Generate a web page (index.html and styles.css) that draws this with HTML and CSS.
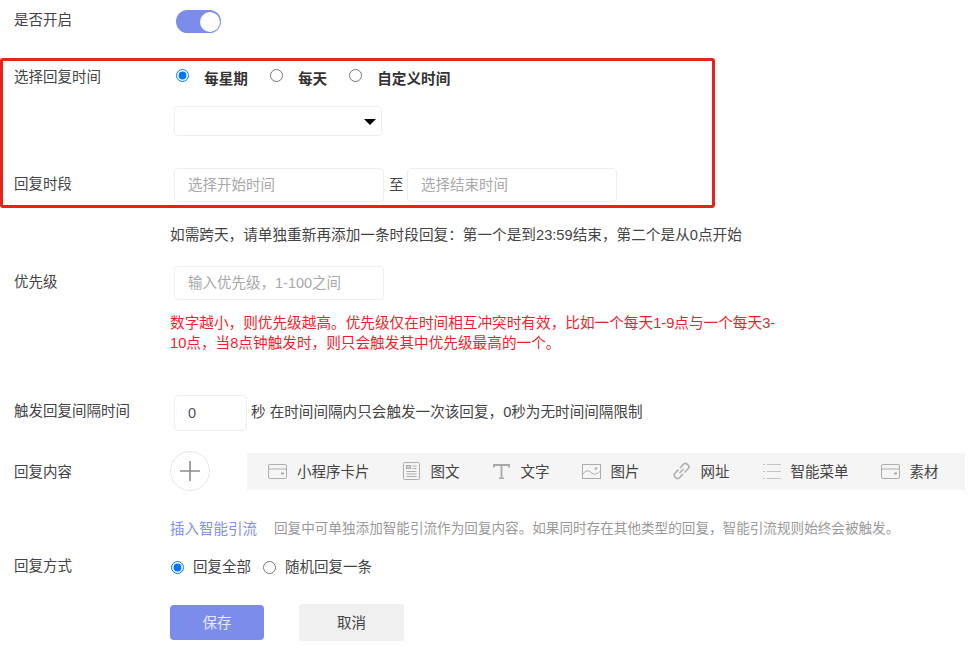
FILE: index.html
```html
<!DOCTYPE html>
<html lang="zh-CN">
<head>
<meta charset="utf-8">
<title>回复设置</title>
<link rel="stylesheet" href="styles.css">
</head>
<body>
<form class="form">
  <div class="row row-switch">
    <span class="label">是否开启</span>
    <div class="field-inset"><span class="switch"><span class="knob"></span></span></div>
  </div>

  <section class="highlight">
    <div class="row row-radio">
      <span class="label label-box">选择回复时间</span>
      <div class="week-radios">
        <label class="week-radio"><input type="radio" name="cycle" checked><b>每星期</b></label>
        <label class="week-radio"><input type="radio" name="cycle"><b>每天</b></label>
        <label class="week-radio"><input type="radio" name="cycle"><b>自定义时间</b></label>
      </div>
    </div>
    <div class="row row-select">
      <span class="label label-box"></span>
      <div class="select"><span class="caret"></span></div>
    </div>
    <div class="row row-time">
      <span class="label label-box label-up-small">回复时段</span>
      <input class="input input-wide" placeholder="选择开始时间">
      <span class="to">至</span>
      <input class="input input-wide" placeholder="选择结束时间">
    </div>
  </section>

  <p class="hint">如需跨天，请单独重新再添加一条时段回复：第一个是到23:59结束，第二个是从0点开始</p>

  <div class="row row-priority">
    <span class="label label-up-small">优先级</span>
    <div class="field-inset"><input class="input input-wide" placeholder="输入优先级，1-100之间"></div>
  </div>
  <p class="warn">数字越小，则优先级越高。优先级仅在时间相互冲突时有效，比如一个每天1-9点与一个每天3-<br>10点，当8点钟触发时，则只会触发其中优先级最高的一个。</p>

  <div class="row row-interval">
    <span class="label label-up">触发回复间隔时间</span>
    <div class="field-inset interval">
      <input class="input input-num" value="0">
      <span class="unit">秒 在时间间隔内只会触发一次该回复，0秒为无时间间隔限制</span>
    </div>
  </div>

  <div class="row row-content">
    <span class="label label-down">回复内容</span>
    <span class="plus">
      <svg width="20" height="20" viewBox="0 0 20 20"><path d="M10 0v20M0 10h20" stroke="#8c8c8c" stroke-width="1.6" fill="none"/></svg>
    </span>
    <div class="toolbar">
      <span class="tool">
        <svg width="19" height="15" viewBox="0 0 19 15" fill="none" stroke="#adadad"><rect x=".5" y=".5" width="18" height="14" rx="1.500"/><path d="M1 5h17"/><path d="M13 9.500h3" stroke-width="2"/></svg>
        <span class="tool-text">小程序卡片</span>
      </span>
      <span class="tool">
        <svg width="19" height="18" viewBox="0 0 19 18" fill="none" stroke="#adadad"><rect x="1.500" y=".5" width="16" height="17" rx="1"/><rect x="4.500" y="3.500" width="4" height="3" fill="#ccc"/><path d="M10.500 4h4M10.500 6.500h4M4.500 9.500h10M4.500 12h10M4.500 14.500h10"/></svg>
        <span class="tool-text">图文</span>
      </span>
      <span class="tool">
        <svg width="19" height="15" viewBox="0 0 19 15" fill="none" stroke="#a8a8a8" stroke-width="1.800"><path d="M2 3.500V1h15v2.500M9.500 1v14M7 14.500h5"/></svg>
        <span class="tool-text">文字</span>
      </span>
      <span class="tool">
        <svg width="19" height="15" viewBox="0 0 19 15" fill="none" stroke="#adadad"><rect x=".5" y=".5" width="18" height="14"/><path d="M1 10c3-4 5-4 8-1.500s5 2 9-1"/><circle cx="14" cy="4.500" r="1.300" fill="#adadad" stroke="none"/></svg>
        <span class="tool-text">图片</span>
      </span>
      <span class="tool">
        <svg width="19" height="18" viewBox="0 0 19 18" fill="none" stroke="#adadad" stroke-width="1.600"><path d="M8 6l3.500-3.800a2.500 2.500 0 0 1 3.700 0l.9.900a2.500 2.500 0 0 1 0 3.600L12.500 10.500"/><path d="M11 12l-3.500 3.800a2.500 2.500 0 0 1-3.700 0l-.9-.9a2.500 2.500 0 0 1 0-3.600L6.500 7.500"/><path d="M7.500 11l4-4"/></svg>
        <span class="tool-text">网址</span>
      </span>
      <span class="tool">
        <svg width="19" height="17" viewBox="0 0 19 17" fill="none" stroke="#c4c4c4" stroke-width="1.200"><path d="M5 1.500h14M5 8.500h14M5 15.500h14M1 1.500h2M1 8.500h2M1 15.500h2"/></svg>
        <span class="tool-text">智能菜单</span>
      </span>
      <span class="tool">
        <svg width="19" height="15" viewBox="0 0 19 15" fill="none" stroke="#adadad"><rect x=".5" y=".5" width="18" height="14" rx="1.500"/><path d="M1 5h17"/><path d="M13 9.500h3" stroke-width="2"/></svg>
        <span class="tool-text">素材</span>
      </span>
    </div>
  </div>

  <p class="guide"><a class="guide-link">插入智能引流</a><span class="guide-text">回复中可单独添加智能引流作为回复内容。如果同时存在其他类型的回复，智能引流规则始终会被触发。</span></p>

  <div class="row row-method">
    <span class="label label-up-small">回复方式</span>
    <label class="method"><input type="radio" name="method" checked>回复全部</label>
    <label class="method"><input type="radio" name="method">随机回复一条</label>
  </div>

  <div class="actions">
    <button type="button" class="btn btn-save">保存</button>
    <button type="button" class="btn btn-cancel">取消</button>
  </div>
</form>
</body>
</html>
```

FILE: styles.css
```css
* { box-sizing: border-box; }

html, body {
  margin: 0;
  background: #fff;
}

body {
  width: 979px;
  height: 664px;
  overflow: hidden;
  font-family: "Liberation Sans", "Noto Sans CJK SC", sans-serif;
  font-size: 14.5px;
  color: #444;
}

.form {
  display: flex;
  flex-direction: column;
}

p { margin: 0; }

.row {
  display: flex;
  align-items: center;
}

.label {
  flex: none;
  width: 170px;
  padding-left: 14px;
  line-height: 20px;
}

.label-box {
  width: 171px;
  padding-left: 11px;
}

.label-up { margin-bottom: 4px; }
.label-up-small { margin-bottom: 2px; }
.label-down { margin-top: 1px; }

.field-inset {
  margin-left: 4px;
  display: flex;
  align-items: center;
}

/* switch */
.row-switch { height: 40px; }

.switch {
  display: flex;
  justify-content: flex-end;
  width: 45px;
  height: 23px;
  margin: 3px 0 0 2px;
  padding: 1.500px;
  border-radius: 12px;
  background: #7b8cea;
}

.knob {
  width: 20px;
  height: 20px;
  border-radius: 50%;
  background: #fff;
}

/* highlighted block */
.highlight {
  width: 715px;
  height: 150px;
  margin-top: 18px;
  padding-top: 5px;
  border: 3px solid #ea2118;
  border-radius: 3px;
}

.row-radio { height: 22px; }

.week-radios {
  display: flex;
  margin-left: 2px;
}

.week-radio {
  display: flex;
  align-items: center;
  margin-right: 22px;
  font-size: 14.650px;
  color: #333;
}

.week-radio input {
  width: 13px;
  height: 13px;
  margin: 0 15px 3px 0;
}

.week-radio b { font-weight: 700; }

.row-select {
  height: 30px;
  margin-top: 18px;
}

.select {
  position: relative;
  width: 208px;
  height: 30px;
  border: 1px solid #eee;
  border-radius: 4px;
}

.caret {
  position: absolute;
  top: 12px;
  right: 5px;
  width: 0;
  height: 0;
  border-left: 6.500px solid transparent;
  border-right: 6.500px solid transparent;
  border-top: 6px solid #000;
}

.row-time {
  height: 34px;
  margin-top: 32px;
}

.input {
  height: 34px;
  padding: 0 13px;
  border: 1px solid #eee;
  border-radius: 4px;
  background: #fff;
  outline: none;
  font: inherit;
  color: #555;
}

.input::placeholder { color: #a8a8a8; opacity: 1; }

.input-wide { width: 210px; }

.to {
  flex: none;
  width: 23px;
  margin-bottom: 3px;
  padding-left: 5px;
  color: #444;
}

/* notes */
.hint {
  margin-top: 17px;
  margin-left: 170px;
  line-height: 20px;
  font-size: 14.650px;
}

.row-priority {
  height: 34px;
  margin-top: 21px;
}

.warn {
  margin-top: 13px;
  margin-left: 170px;
  line-height: 20px;
  font-size: 14.650px;
  color: #f01e2c;
}

.row-interval {
  height: 36px;
  margin-top: 42px;
}

.input-num {
  width: 73px;
  height: 36px;
}

.unit {
  margin: 0 0 6px 4px;
  font-size: 14.600px;
}

/* reply content */
.row-content {
  height: 40px;
  margin-top: 20px;
}

.plus {
  flex: none;
  display: flex;
  align-items: center;
  justify-content: center;
  width: 40px;
  height: 40px;
  border: 1px solid #e6e6e6;
  border-radius: 50%;
}

.toolbar {
  display: flex;
  align-items: center;
  gap: 32px;
  width: 718px;
  height: 37px;
  margin-left: 37px;
  padding-left: 21px;
  background: #f5f5f5;
}

.tool {
  display: flex;
  align-items: center;
  gap: 10px;
  white-space: nowrap;
}

.tool-text { margin-bottom: 2px; }

.guide {
  display: flex;
  align-items: center;
  margin-top: 28px;
  margin-left: 170px;
  line-height: 20px;
}

.guide-link { color: #7f90e6; }

.guide-text {
  margin-left: 17px;
  font-size: 13.600px;
  color: #999;
}

.row-method {
  height: 20px;
  margin-top: 18px;
}

.method {
  display: flex;
  align-items: center;
  margin: 0 11px 4px 0;
}

.method input {
  width: 13px;
  height: 13px;
  margin: 4px 9px 0 1px;
}

/* actions */
.actions {
  display: flex;
  align-items: center;
  gap: 35px;
  margin-top: 27px;
  margin-left: 170px;
}

.btn {
  padding: 0 0 2px;
  border: 0;
  border-radius: 4px;
  font: inherit;
}

.btn-save {
  width: 94px;
  height: 35px;
  background: #7b8cea;
  color: #e8ebff;
}

.btn-cancel {
  width: 105px;
  height: 37px;
  background: #f0f0f0;
  color: #444;
}
```
